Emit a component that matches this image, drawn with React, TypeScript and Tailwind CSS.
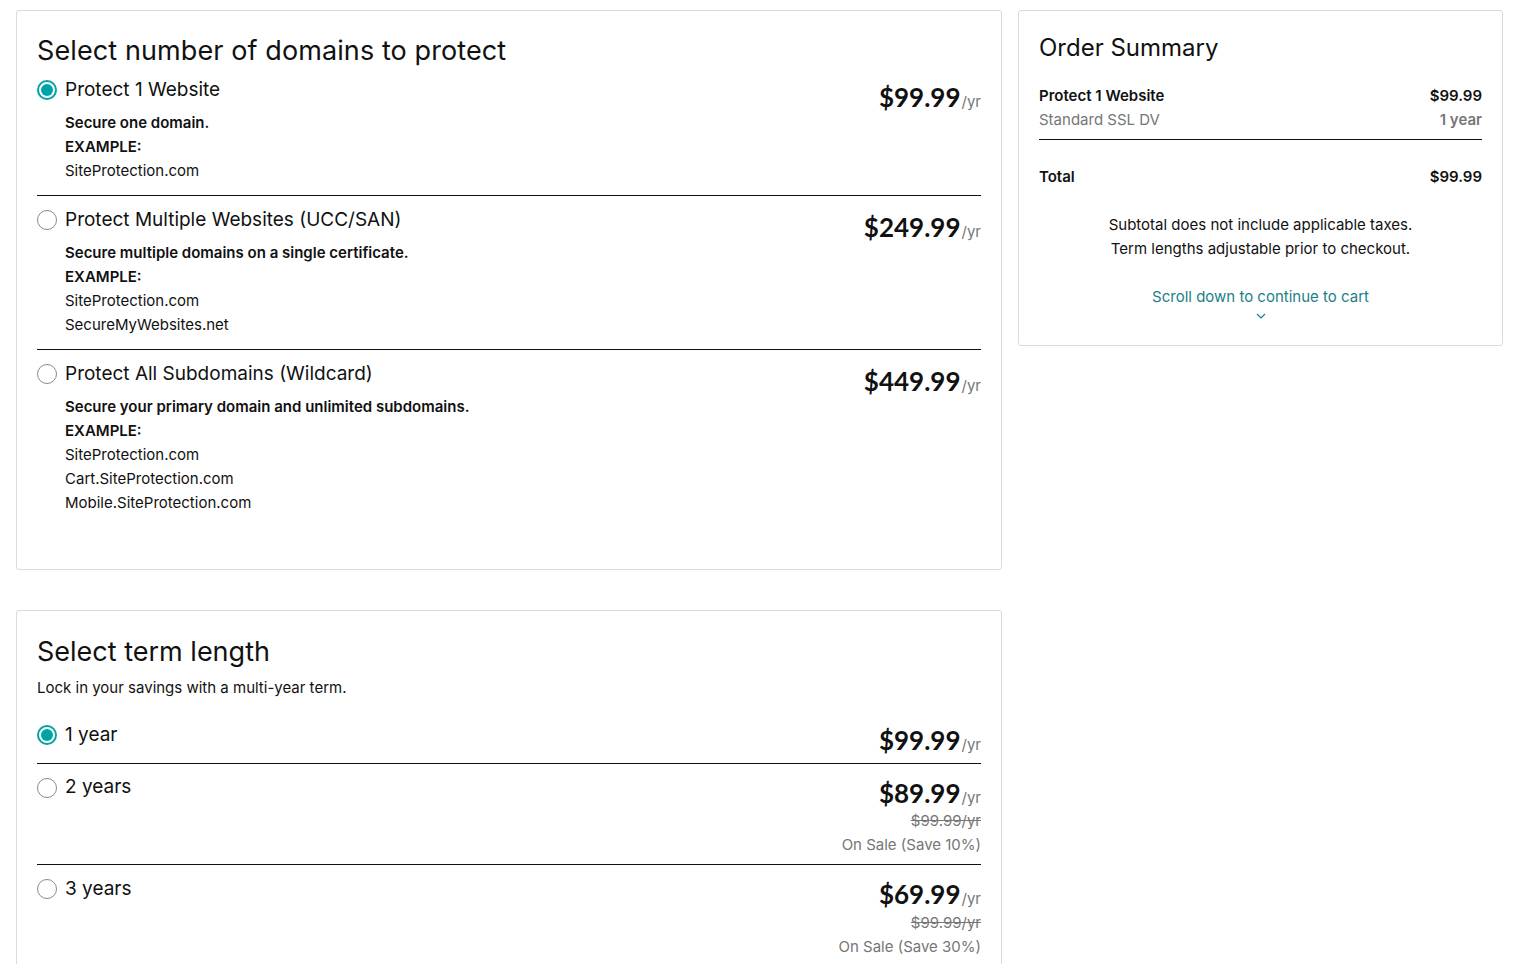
import React from 'react';

const font = { fontFamily: 'Inter, "Noto Sans", sans-serif' };

const Radio = ({ checked }: { checked?: boolean }) =>
  checked ? (
    <span className="w-5 h-5 rounded-full border-2 border-[#00a4a6] flex items-center justify-center shrink-0">
      <span className="w-3 h-3 rounded-full bg-[#00a4a6]" />
    </span>
  ) : (
    <span className="w-5 h-5 rounded-full border border-[#8a8a8a] shrink-0" />
  );

const Price = ({ amount }: { amount: string }) => (
  <div className="flex items-baseline justify-end text-[#111]">
    <span className="text-[26px] font-bold leading-8 font-['Lato',sans-serif]">{amount}</span>
    <span className="text-[15px] text-[#767676] ml-[1px]">/yr</span>
  </div>
);

interface DomainOption {
  label: string;
  price: string;
  desc: string;
  examples: string[];
  checked?: boolean;
}

const domainOptions: DomainOption[] = [
  { label: 'Protect 1 Website', price: '$99.99', desc: 'Secure one domain.', examples: ['SiteProtection.com'], checked: true },
  {
    label: 'Protect Multiple Websites (UCC/SAN)',
    price: '$249.99',
    desc: 'Secure multiple domains on a single certificate.',
    examples: ['SiteProtection.com', 'SecureMyWebsites.net'],
  },
  {
    label: 'Protect All Subdomains (Wildcard)',
    price: '$449.99',
    desc: 'Secure your primary domain and unlimited subdomains.',
    examples: ['SiteProtection.com', 'Cart.SiteProtection.com', 'Mobile.SiteProtection.com'],
  },
];

const terms = [
  { label: '1 year', price: '$99.99', checked: true },
  { label: '2 years', price: '$89.99', was: '$99.99/yr', sale: 'On Sale (Save 10%)' },
  { label: '3 years', price: '$69.99', was: '$99.99/yr', sale: 'On Sale (Save 30%)' },
];

export default function App() {
  return (
    <div className="min-h-screen bg-white text-[#111] flex gap-4 pl-4 pr-3 pt-[10px]" style={font}>
      {/* Left column */}
      <div className="w-[986px] shrink-0 flex flex-col gap-10">
        <section className="border border-[#d6dbe0] rounded-[3px] px-[20px] pt-[20px] pb-[42px]">
          <h2 className="text-[27px] leading-[40px] tracking-[0.1px]">Select number of domains to protect</h2>
          <div className="mt-[5px]">
            {domainOptions.map((o, i) => (
              <div key={o.label} className={i > 0 ? 'border-t border-[#111] pt-[10px]' : ''}>
                <div className="flex justify-between">
                  <div>
                    <div className="flex items-center gap-2 h-[28px]">
                      <Radio checked={o.checked} />
                      <span className="text-[19px]">{o.label}</span>
                    </div>
                    <div className="pl-7 pt-[7px] pb-[12px] text-[15px] leading-6">
                      <div className="font-semibold">{o.desc}</div>
                      <div className="font-semibold">EXAMPLE:</div>
                      {o.examples.map((e) => (
                        <div key={e}>{e}</div>
                      ))}
                    </div>
                  </div>
                  <div className="pt-[5px]">
                    <Price amount={o.price} />
                  </div>
                </div>
              </div>
            ))}
          </div>
        </section>

        <section className="border border-[#d6dbe0] rounded-[3px] px-[20px] pt-[22px] pb-6">
          <h2 className="text-[27px] leading-[38px]">Select term length</h2>
          <p className="text-[15px] leading-6 mt-[5px] mb-[21px]">Lock in your savings with a multi-year term.</p>
          {terms.map((t, i) => (
            <div
              key={t.label}
              className={`flex justify-between ${i > 0 ? 'border-t border-[#111] pt-[10px]' : ''} ${
                i < terms.length - 1 ? (t.was ? 'pb-[7px]' : 'pb-[6px]') : ''
              }`}
            >
              <div className="flex items-center gap-2 h-[28px]">
                <Radio checked={t.checked} />
                <span className="text-[19px]">{t.label}</span>
              </div>
              <div className="flex flex-col items-end pt-[3px]">
                <Price amount={t.price} />
                {t.was && (
                  <>
                    <div className="text-[15px] leading-6 text-[#767676] line-through">{t.was}</div>
                    <div className="text-[15px] leading-6 text-[#767676]">{t.sale}</div>
                  </>
                )}
              </div>
            </div>
          ))}
        </section>
      </div>

      {/* Order summary */}
      <aside className="w-[485px] shrink-0 self-start border border-[#d6dbe0] rounded-[3px] px-[20px] pt-[19px] pb-[26px]">
        <h2 className="text-[24px] leading-9">Order Summary</h2>
        <div className="mt-[18px] pb-[7px] border-b border-[#111] text-[15px] leading-6">
          <div className="flex justify-between font-semibold">
            <span>Protect 1 Website</span>
            <span>$99.99</span>
          </div>
          <div className="flex justify-between text-[#767676]">
            <span>Standard SSL DV</span>
            <span className="font-semibold">1 year</span>
          </div>
        </div>
        <div className="flex justify-between font-semibold text-[15px] leading-6 mt-[25px]">
          <span>Total</span>
          <span>$99.99</span>
        </div>
        <div className="text-center text-[15px] leading-6 mt-[24px]">
          <div>Subtotal does not include applicable taxes.</div>
          <div>Term lengths adjustable prior to checkout.</div>
        </div>
        <div className="mt-[24px] flex flex-col items-center text-[#1b7f87] text-[15px] leading-6">
          <span>Scroll down to continue to cart</span>
          <svg width="10" height="6" viewBox="0 0 10 6" className="mt-[4px]">
            <path d="M1 1l4 4 4-4" stroke="#1b7f87" strokeWidth="1.2" fill="none" />
          </svg>
        </div>
      </aside>
    </div>
  );
}
